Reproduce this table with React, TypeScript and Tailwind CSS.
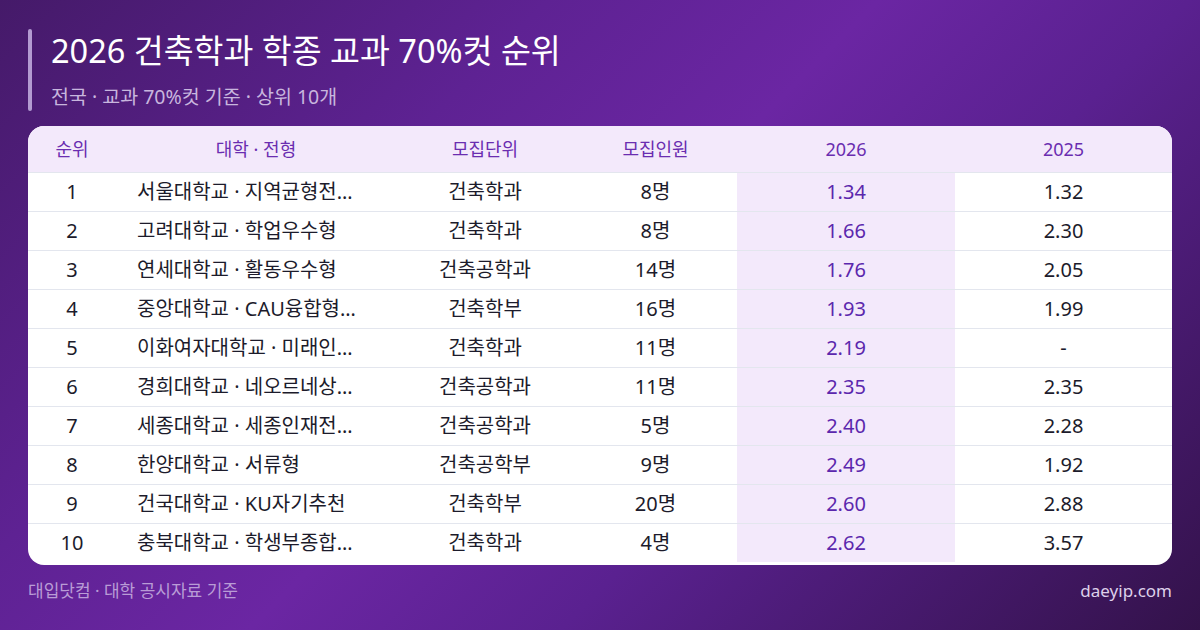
const rows = [
  { rank: 1, name: '서울대학교 · 지역균형전…', unit: '건축학과', count: '8명', y26: '1.34', y25: '1.32' },
  { rank: 2, name: '고려대학교 · 학업우수형', unit: '건축학과', count: '8명', y26: '1.66', y25: '2.30' },
  { rank: 3, name: '연세대학교 · 활동우수형', unit: '건축공학과', count: '14명', y26: '1.76', y25: '2.05' },
  { rank: 4, name: '중앙대학교 · CAU융합형…', unit: '건축학부', count: '16명', y26: '1.93', y25: '1.99' },
  { rank: 5, name: '이화여자대학교 · 미래인…', unit: '건축학과', count: '11명', y26: '2.19', y25: '-' },
  { rank: 6, name: '경희대학교 · 네오르네상…', unit: '건축공학과', count: '11명', y26: '2.35', y25: '2.35' },
  { rank: 7, name: '세종대학교 · 세종인재전…', unit: '건축공학과', count: '5명', y26: '2.40', y25: '2.28' },
  { rank: 8, name: '한양대학교 · 서류형', unit: '건축공학부', count: '9명', y26: '2.49', y25: '1.92' },
  { rank: 9, name: '건국대학교 · KU자기추천', unit: '건축학부', count: '20명', y26: '2.60', y25: '2.88' },
  { rank: 10, name: '충북대학교 · 학생부종합…', unit: '건축학과', count: '4명', y26: '2.62', y25: '3.57' },
]

const cols = 'grid grid-cols-[88px_280px_178px_163px_218px_1fr]'

export default function App() {
  return (
    <div className="w-[1200px] h-[630px] overflow-hidden bg-[linear-gradient(135deg,#451a69_0%,#5e2293_30%,#6b26a3_48%,#5a2190_65%,#33124a_100%)] px-[28px] pt-[29px] font-['Noto_Sans','Noto_Sans_CJK_KR',sans-serif]">
      {/* Title */}
      <div className="flex gap-[19px]">
        <div className="w-[4px] rounded-full bg-[#b39bd1]" />
        <div className="pb-[2px]">
          <h1 className="text-[32.5px] leading-[44px] text-white">2026 건축학과 학종 교과 70%컷 순위</h1>
          <p className="mt-[12px] text-[19.5px] leading-[24px] text-[#c8b6de]">전국 · 교과 70%컷 기준 · 상위 10개</p>
        </div>
      </div>

      {/* Table */}
      <div className="mt-[15px] overflow-hidden rounded-[16px] bg-white pb-[3px]">
        <div className={`${cols} h-[46px] items-center bg-[#f3e9fb] text-[18px] text-[#6a2db0]`}>
          <div className="text-center">순위</div>
          <div className="text-center">대학 · 전형</div>
          <div className="text-center">모집단위</div>
          <div className="text-center">모집인원</div>
          <div className="text-center">2026</div>
          <div className="text-center">2025</div>
        </div>
        {rows.map(r => (
          <div key={r.rank} className={`${cols} h-[39px] border-t border-[#e3e6ee] text-[20px] text-[#1c1b2b]`}>
            <div className="flex items-center justify-center">{r.rank}</div>
            <div className="flex items-center pl-[21px] whitespace-nowrap">{r.name}</div>
            <div className="flex items-center justify-center">{r.unit}</div>
            <div className="flex items-center justify-center">{r.count}</div>
            <div className="flex items-center justify-center bg-[#f3e9fb] text-[#5b27ad]">{r.y26}</div>
            <div className="flex items-center justify-center">{r.y25}</div>
          </div>
        ))}
      </div>

      {/* Footer */}
      <div className="mt-[13px] flex items-center justify-between">
        <span className="text-[17px] text-[#b99cd6]">대입닷컴 · 대학 공시자료 기준</span>
        <span className="text-[17px] text-[#ddd0ea]">daeyip.com</span>
      </div>
    </div>
  )
}
